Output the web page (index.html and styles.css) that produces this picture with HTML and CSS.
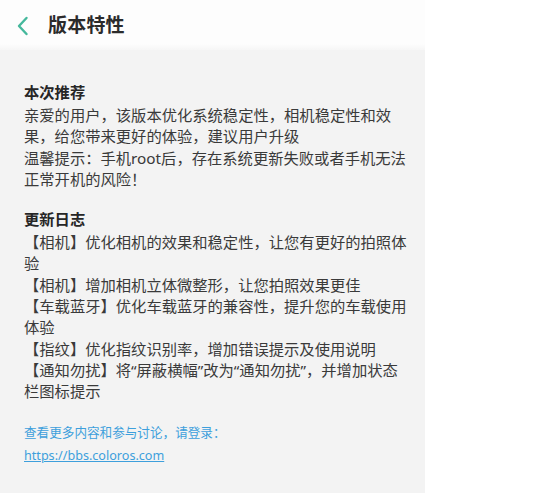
FILE: index.html
```html
<!DOCTYPE html>
<html lang="zh-CN">
<head>
<meta charset="utf-8">
<title>版本特性</title>
<link rel="stylesheet" href="styles.css">
</head>
<body>
<div class="panel">
  <header class="bar">
    <svg class="back" width="13" height="20" viewBox="0 0 13 20"><path d="M10.5 2 L3 10 L10.5 18" fill="none" stroke="#45b89c" stroke-width="2.4" stroke-linecap="round" stroke-linejoin="round"/></svg>
    <h1 class="title">版本特性</h1>
  </header>
  <main class="content">
    <section class="sec">
      <h2 class="head">本次推荐</h2>
      <p class="line">亲爱的用户，该版本优化系统稳定性，相机稳定性和效果，给您带来更好的体验，建议用户升级</p>
      <p class="line">温馨提示：手机root后，存在系统更新失败或者手机无法正常开机的风险！</p>
    </section>
    <section class="sec">
      <h2 class="head">更新日志</h2>
      <p class="line">【相机】优化相机的效果和稳定性，让您有更好的拍照体验</p>
      <p class="line">【相机】增加相机立体微整形，让您拍照效果更佳</p>
      <p class="line">【车载蓝牙】优化车载蓝牙的兼容性，提升您的车载使用体验</p>
      <p class="line">【指纹】优化指纹识别率，增加错误提示及使用说明</p>
      <p class="line">【通知勿扰】将“屏蔽横幅”改为“通知勿扰”，并增加状态栏图标提示</p>
    </section>
    <section class="more">
      <p class="more-text">查看更多内容和参与讨论，请登录：</p>
      <a class="more-link" href="#">https://bbs.coloros.com</a>
    </section>
  </main>
</div>
</body>
</html>
```
FILE: styles.css
```css
html, body {
  margin: 0;
  padding: 0;
  background: #ffffff;
}
body {
  width: 545px;
  height: 493px;
  display: flex;
  font-family: "Noto Sans", "Noto Sans CJK SC", sans-serif;
  color: #3a3a3a;
}
.panel {
  width: 425px;
  height: 493px;
  background: #f3f3f3;
  display: flex;
  flex-direction: column;
}
.bar {
  height: 50px;
  flex: none;
  display: flex;
  align-items: center;
  padding-left: 16px;
  background: linear-gradient(to bottom, #fdfdfd 0, #fdfdfd 44px, #f6f6f6 50px);
}
.back {
  display: block;
  margin-top: 1px;
}
.title {
  margin: 0 0 0 19px;
  font-size: 19px;
  font-weight: 700;
  color: #2b2b2b;
  line-height: 24px;
  letter-spacing: 0.2px;
}
.content {
  padding: 29px 15px 0 24px;
  width: 386px;
}
.sec {
  margin-bottom: 16px;
}
.head {
  margin: 0;
  font-size: 15.3px;
  font-weight: 700;
  color: #262626;
  line-height: 26px;
}
.line {
  margin: 0;
  font-size: 15.3px;
  line-height: 21.3px;
}
.more {
  margin-top: 20px;
}
.more-text {
  margin: 0;
  font-size: 12.6px;
  line-height: 20px;
  color: #3d9fdc;
}
.more-link {
  display: inline-block;
  font-size: 12.6px;
  line-height: 20px;
  color: #3d9fdc;
  text-decoration: underline;
}
```
